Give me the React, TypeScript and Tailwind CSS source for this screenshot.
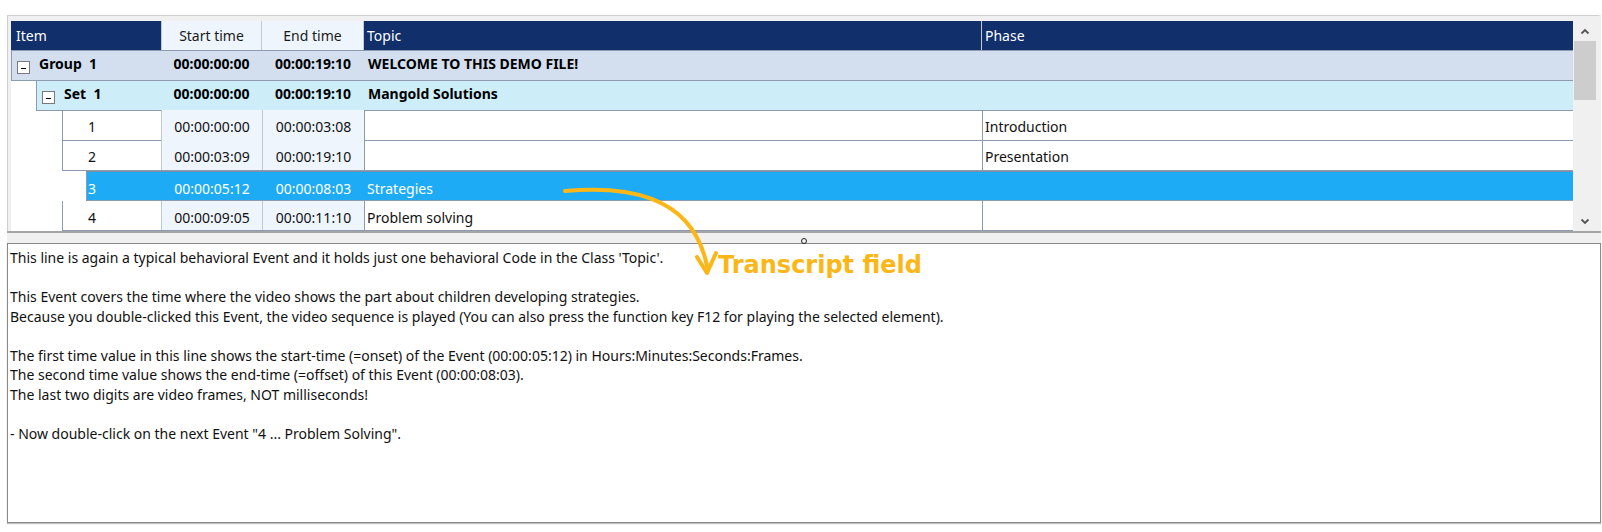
import React from "react";

type EventRow = {
  id: string;
  start: string;
  end: string;
  topic: string;
  phase: string;
  selected?: boolean;
  pad: string;
};

const events: EventRow[] = [
  { id: "1", start: "00:00:00:00", end: "00:00:03:08", topic: "", phase: "Introduction", pad: "pt-[5px]" },
  { id: "2", start: "00:00:03:09", end: "00:00:19:10", topic: "", phase: "Presentation", pad: "pt-[5px]" },
  { id: "3", start: "00:00:05:12", end: "00:00:08:03", topic: "Strategies", phase: "", selected: true, pad: "pt-[6px]" },
  { id: "4", start: "00:00:09:05", end: "00:00:11:10", topic: "Problem solving", phase: "", pad: "pt-[6px]" },
];

const transcript = [
  "This line is again a typical behavioral Event and it holds just one behavioral Code in the Class 'Topic'.",
  "",
  "This Event covers the time where the video shows the part about children developing strategies.",
  "Because you double-clicked this Event, the video sequence is played (You can also press the function key F12 for playing the selected element).",
  "",
  "The first time value in this line shows the start-time (=onset) of the Event (00:00:05:12) in Hours:Minutes:Seconds:Frames.",
  "The second time value shows the end-time (=offset) of this Event (00:00:08:03).",
  "The last two digits are video frames, NOT milliseconds!",
  "",
  "- Now double-click on the next Event \"4 ... Problem Solving\".",
];

function MinusBox() {
  return (
    <span className="flex h-[13px] w-[13px] shrink-0 items-center justify-center border border-[#7a7a7a] bg-white">
      <span className="mt-[2px] h-[1px] w-[5px] bg-black" />
    </span>
  );
}

function HeaderRow() {
  return (
    <div className="flex h-[31px] border-b border-[#8d9bb0] text-[14px]">
      <div className="flex w-[150px] items-center bg-[#112f6a] pl-[5px] text-white">Item</div>
      <div className="flex w-[101px] items-center justify-center border-x border-[#c3c9d0] bg-[#eef5fd] text-[#1a1a1a]">
        Start time
      </div>
      <div className="flex w-[102px] items-center justify-center border-r border-[#c3c9d0] bg-[#eef5fd] text-[#1a1a1a]">
        End time
      </div>
      <div className="flex w-[618px] items-center border-r border-[#c3c9d0] bg-[#112f6a] pl-[3px] text-white">
        Topic
      </div>
      <div className="flex w-[591px] items-center bg-[#112f6a] pl-[3px] text-white">Phase</div>
    </div>
  );
}

function GroupRow({
  indent,
  label,
  topic,
  bg,
}: {
  indent: string;
  label: string;
  topic: string;
  bg: string;
}) {
  return (
    <div className="flex h-[31px] text-[14px] font-bold">
      <div className={indent} />
      <div className={`flex flex-1 items-start border-b border-l border-[#8d9bb0] pt-[2px] ${bg}`}>
        <div className="flex flex-1 items-start gap-[9px] pl-[5px]">
          <span className="mt-[8px]">
            <MinusBox />
          </span>
          <span className="whitespace-pre">{label}</span>
        </div>
        <div className="w-[101px] text-center">00:00:00:00</div>
        <div className="w-[102px] text-center">00:00:19:10</div>
        <div className="w-[618px] pl-[4px]">{topic}</div>
        <div className="w-[591px]" />
      </div>
    </div>
  );
}

function Row({ row }: { row: EventRow }) {
  const sel = row.selected;
  return (
    <div className="flex h-[31px] text-[14px]">
      <div className={sel ? "w-[75px] shrink-0" : "w-[51px] shrink-0"} />
      <div
        className={`flex flex-1 border-b border-l border-[#8d9bb0] ${row.pad} ${
          sel ? "border-t border-t-[#7f8fa3] bg-[#1eabf6] text-white" : "bg-white text-[#111]"
        }`}
      >
        <div className={`flex flex-1 ${sel ? "pl-[1px]" : "pl-[25px]"}`}>{row.id}</div>
        <div
          className={`w-[101px] border-l text-center ${
            sel ? "border-transparent" : "-mt-[6px] border-[#c3c9d0] bg-[#eef5fd] pt-[6px]"
          }`}
        >
          {row.start}
        </div>
        <div
          className={`w-[102px] border-l text-center ${
            sel ? "border-transparent" : "-mt-[6px] border-[#c3c9d0] bg-[#eef5fd] pt-[6px]"
          }`}
        >
          {row.end}
        </div>
        <div
          className={`w-[618px] border-l pl-[2px] ${
            sel ? "border-transparent" : "-mt-[6px] border-[#8d9bb0] pt-[6px]"
          }`}
        >
          {row.topic}
        </div>
        <div
          className={`w-[591px] border-l pl-[2px] ${
            sel ? "border-transparent" : "-mt-[6px] border-[#8d9bb0] pt-[6px]"
          }`}
        >
          {row.phase}
        </div>
      </div>
    </div>
  );
}

function ScrollBar() {
  return (
    <div className="flex w-[24px] flex-col bg-[#f0f0f0]">
      <div className="flex h-[20px] items-center justify-center">
        <svg width="10" height="7" viewBox="0 0 10 7">
          <path d="M1.5 5.5 L5 2 L8.5 5.5" fill="none" stroke="#555" strokeWidth="1.8" />
        </svg>
      </div>
      <div className="mx-[1px] h-[59px] bg-[#cdcdcd]" />
      <div className="flex-1" />
      <div className="flex h-[20px] items-center justify-center">
        <svg width="10" height="7" viewBox="0 0 10 7">
          <path d="M1.5 1.5 L5 5 L8.5 1.5" fill="none" stroke="#555" strokeWidth="1.8" />
        </svg>
      </div>
    </div>
  );
}

export default function App() {
  return (
    <div
      className="relative h-[532px] w-[1602px] overflow-hidden bg-white"
      style={{ fontFamily: '"Noto Sans", "Open Sans", sans-serif' }}
    >
      <div className="ml-[7px] mt-[15px] w-[1594px]">
        {/* Grid panel */}
        <div className="border-l border-r-[3px] border-t border-[#d0d0d0] border-r-[#f0f0f0] bg-[#f0f0f0] pl-[3px] pt-[5px]">
          <div className="flex h-[210px]">
            <div className="flex w-[1562px] flex-col overflow-hidden bg-white">
              <HeaderRow />
              <GroupRow indent="w-0" label="Group  1" topic="WELCOME TO THIS DEMO FILE!" bg="bg-[#d3dfef]" />
              <GroupRow indent="w-[25px] shrink-0" label="Set  1" topic="Mangold Solutions" bg="bg-[#cdeef9]" />
              {events.map((r) => (
                <Row key={r.id} row={r} />
              ))}
            </div>
            <ScrollBar />
          </div>
        </div>

        {/* Splitter */}
        <div className="flex h-[12px] items-start justify-center border-t-2 border-[#a5a5a5] bg-[#f0f0f0]">
          <span className="mt-[5px] h-[6px] w-[6px] rounded-full border border-[#222]" />
        </div>

        {/* Transcript field */}
        <div className="h-[280px] border border-[#8a8a8a] bg-white pl-[2px] pt-[4px] text-[14px] leading-[19.5px] text-[#111] shadow-[0_1px_1px_rgba(0,0,0,0.25)]">
          {transcript.map((line, i) => (
            <div key={i} className="h-[19.5px] whitespace-pre">
              {line}
            </div>
          ))}
        </div>
      </div>

      {/* Annotation */}
      <svg className="absolute left-0 top-0" width="1602" height="532" viewBox="0 0 1602 532">
        <path
          d="M565 191 C 622 186, 692 192, 707 266"
          fill="none"
          stroke="#fbb617"
          strokeWidth="4"
          strokeLinecap="round"
        />
        <path
          d="M697 257 L707 273 L716 253"
          fill="none"
          stroke="#fbb617"
          strokeWidth="4"
          strokeLinecap="round"
          strokeLinejoin="round"
        />
      </svg>
      <div
        className="absolute left-[718px] top-[253px] text-[24px] font-bold leading-none text-[#fbb617]"
        style={{ fontFamily: '"DejaVu Sans", Verdana, sans-serif' }}
      >
        Transcript field
      </div>
    </div>
  );
}
